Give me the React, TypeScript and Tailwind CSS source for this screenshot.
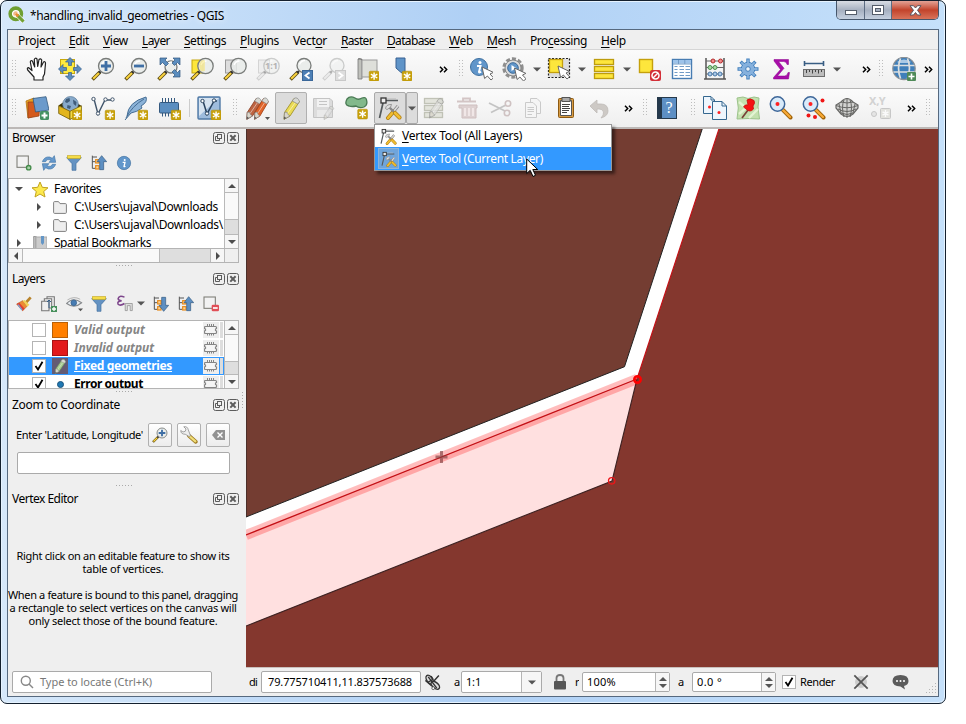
import React, { useLayoutEffect, useRef, useState } from "react";

type Kids = { children?: React.ReactNode };

/* Text whose letter spacing adapts so that it fills a given width. */
function Fit({ w, className = "", children }: Kids & { w: number; className?: string }) {
  const ref = useRef<HTMLSpanElement>(null);
  const [ls, setLs] = useState(0);
  useLayoutEffect(() => {
    const el = ref.current;
    if (!el) return;
    const n = (el.textContent || "").length;
    setLs((w - el.getBoundingClientRect().width) / Math.max(1, n));
  }, [w]);
  return (
    <span ref={ref} className={"inline-block shrink-0 whitespace-pre " + className} style={{ letterSpacing: ls }}>
      {children}
    </span>
  );
}

const U = ({ children }: Kids) => <span className="underline underline-offset-2">{children}</span>;

function Ico({ children, s = 24, className = "" }: Kids & { s?: number; className?: string }) {
  return (
    <svg width={s} height={s} viewBox="0 0 24 24" fill="none" className={"shrink-0 " + className}>
      {children}
    </svg>
  );
}
const Cell = ({ children, className = "" }: Kids & { className?: string }) => (
  <div className={"flex h-8 w-[33px] shrink-0 items-center justify-center pr-px " + className}>{children}</div>
);
const Handle = ({ className = "" }: { className?: string }) => (
  <div className={"flex shrink-0 justify-center " + className}>
    <svg width="5" height="18" viewBox="0 0 5 18">
      {[0, 3, 6, 9, 12, 15].map((y) => (
        <g key={y} fill="#bdbdbd">
          <rect x="0" y={y} width="1" height="1" />
          <rect x="3" y={y} width="1" height="1" />
        </g>
      ))}
    </svg>
  </div>
);
const Arrow = ({ className = "w-[11px]" }: { className?: string }) => (
  <div className={"flex shrink-0 justify-center " + className}>
    <svg width="8" height="5" viewBox="0 0 8 5"><path d="M0 0.5H8L4 4.5Z" fill="#555" /></svg>
  </div>
);
const More = ({ className = "w-6" }: { className?: string }) => (
  <div className={"flex shrink-0 justify-center " + className}>
    <svg width="9" height="7" viewBox="0 0 9 7" fill="none" stroke="#000" strokeWidth="1.5"><path d="M1 .7L3.7 3.5L1 6.3M5 .7L7.7 3.5L5 6.3" /></svg>
  </div>
);

/* Reusable icon parts */
const Star = ({ x = 14, y = 14 }: { x?: number; y?: number }) => (
  <g transform={`translate(${x} ${y})`}>
    <rect x=".2" y=".2" width="9.8" height="9.8" rx="1.2" fill="#c9a20c" stroke="#b38c00" strokeWidth=".5" />
    <path d="M5.1 1.4V8.8M1.9 3.2L8.3 7M8.3 3.2L1.9 7" stroke="#fff" strokeWidth="1.4" />
  </g>
);
const Lens = ({ dim = false, lx = 15, ly = 9, r = 7.5 }: { dim?: boolean; lx?: number; ly?: number; r?: number }) => (
  <g opacity={dim ? 0.35 : 1}>
    <path d="M1.5 22.5L9 15" stroke={dim ? "#888" : "#5d4b13"} strokeWidth="3.6" />
    <path d="M2.2 21.8L8.4 15.6" stroke={dim ? "#ddd" : "#fcd53f"} strokeWidth="2" />
    <path d="M8 16L10 14" stroke="#333" strokeWidth="2.4" />
    <circle cx={lx} cy={ly} r={r} fill="#e8ebe9" fillOpacity=".85" stroke="#797c7a" strokeWidth="1.3" />
    <path d={`M${lx - 4.5} ${ly - 1}Q${lx - 3} ${ly - 5} ${lx + 1} ${ly - 5}`} stroke="#fff" strokeWidth="1.3" />
  </g>
);
const Pencil = ({ c = "#eadb55", d = "#a1932b", tip = "#555" }: { c?: string; d?: string; tip?: string }) => (
  <g>
    <path d="M15 2.5L20.5 5.5L11 20L5 23.3L5.5 16.5Z" fill={c} stroke={d} strokeWidth=".9" />
    <path d="M5.5 16.5L8 16L8.5 18L11 20L5 23.3Z" fill="#d9d6cb" stroke="#777" strokeWidth=".6" />
    <path d="M5.1 20.5L7.3 22L5 23.3Z" fill={tip} />
    <path d="M15 2.5Q18.5.3 20.5 5.5L18.8 8L13.2 5Z" fill="#d7d8d2" stroke="#888" strokeWidth=".7" />
    <path d="M16 7L8.5 17.5" stroke="#fff" strokeOpacity=".5" />
  </g>
);
const Cursor = ({ x = 12, y = 10 }: { x?: number; y?: number }) => (
  <path transform={`translate(${x} ${y})`} d="M0 0L2.6 11.5L5.4 9L9 13L11.5 10.8L8 7L11.4 5.4Z" fill="#fff" stroke="#666" strokeWidth="1" />
);
const FourArrows = () => (
  <g fill="#5b8dbe" stroke="#385f8c" strokeWidth=".7">
    <path d="M12 .5L16.5 5H13.5V8.5H10.5V5H7.5Z" />
    <path d="M12 23.5L7.5 19H10.5V15.5H13.5V19H16.5Z" />
    <path d="M.5 12L5 7.5V10.5H8.5V13.5H5V16.5Z" />
    <path d="M23.5 12L19 16.5V13.5H15.5V10.5H19V7.5Z" />
  </g>
);
const Vertex = () => (
  <g>
    <path d="M8 4.5H20M5 7L1.5 22" stroke="#555a5c" strokeWidth="1.7" />
    <path d="M9 2.8H18" stroke="#bbb" strokeWidth=".8" />
    <rect x="3" y="2" width="5" height="5" fill="#eee" stroke="#333" strokeWidth="1.3" />
    <path d="M10 22L16 15" stroke="#a97a12" strokeWidth="4" strokeLinecap="round" />
    <path d="M10 22L16 15" stroke="#f0bd31" strokeWidth="2.6" strokeLinecap="round" />
    <path d="M15.5 15.5L20 10" stroke="#888" strokeWidth="3.2" />
    <path d="M15.5 15.5L20 10" stroke="#ddd" strokeWidth="1.6" />
    <path d="M11 11L17 17" stroke="#888" strokeWidth="2.4" />
    <path d="M7.5 12.5Q8 8.5 13.5 8.4L12.5 11.3L9 13.6Z" fill="#dedede" stroke="#888" strokeWidth=".8" />
    <path d="M17 17L21.5 21.5" stroke="#b07d10" strokeWidth="4" strokeLinecap="round" />
    <path d="M17 17L21.5 21.5" stroke="#f0bd31" strokeWidth="2.6" strokeLinecap="round" />
  </g>
);
const IHand = () => (
  <Ico><path d="M9 23V20L2.7 13Q1.6 10.8 3.7 10.7L7 13.5L5.3 5Q5.6 3 7.4 4L9.7 10L9.3 2.5Q10.2.2 12 2L12.7 9.5L14 2.5Q15.6 1 16.7 3L16 10L18.5 5Q20.5 4 20.5 6.5L19.5 17L18 20V23Z" fill="#fff" stroke="#222" strokeWidth="1.2" strokeLinejoin="round" /></Ico>
);
const IPan = () => (<Ico><rect x="2.5" y="2.5" width="14" height="14" fill="#fdea3e" stroke="#c8a80c" /><FourArrows /></Ico>);
const IZoomIn = ({ s = 24 }: { s?: number }) => (<Ico s={s}><Lens /><path d="M15 4V14M10 9H20" stroke="#3f6fa5" strokeWidth="2.8" /></Ico>);
const IZoomOut = () => (<Ico><Lens /><path d="M10 9H20" stroke="#3f6fa5" strokeWidth="2.8" /></Ico>);
const IZoomFull = () => (
  <Ico><Lens lx={14} ly={10} r={6} />
    <g fill="#5b8dbe" stroke="#31587f" strokeWidth=".7">
      <path d="M3 1H10L8 3L11.5 6.5L9 9L5.5 5.5L3 8Z" /><path d="M23 1V8L20.5 5.5L17.5 8.5L15 6L18 3L16 1Z" /><path d="M23 20H16L18 18L15 15L17.5 12.5L20.5 15.5L23 13Z" />
    </g>
  </Ico>
);
const IZoomSel = () => (<Ico><rect x="2" y="3" width="11" height="13" fill="#fde63c" stroke="#c5a60c" /><Lens lx={15.5} r={7.7} /><path d="M11 4Q15 2 15 4V14H11Q8 9 11 4" fill="#f7e36b" opacity=".5" /></Ico>);
const IZoomLayer = () => (<Ico><rect x="2.5" y="3" width="11" height="13" fill="#ddd" stroke="#999" /><Lens lx={15.5} r={7.7} /></Ico>);
const IZoomNative = () => (
  <div className="relative">
    <Ico><rect x="2.5" y="3" width="11" height="13" fill="#eee" stroke="#d4d4d4" /><Lens dim lx={15.5} r={7.7} /></Ico>
    <span className="absolute left-[9px] top-[2px] text-[9px] font-bold leading-[14px] text-[#b3b3b3]">1:1</span>
  </div>
);
const IZoomStep = ({ dim = false }: { dim?: boolean }) => (
  <Ico><Lens dim={dim} lx={15} ly={8.5} r={7} /><rect x="13.5" y="13.5" width="10" height="10" fill={dim ? "#ddd" : "#4d7fb5"} stroke={dim ? "#c8c8c8" : "#3a6799"} /><path d={dim ? "M16.5 15.5L20.5 18.5L16.5 21.5" : "M20.5 15.5L16.5 18.5L20.5 21.5"} stroke="#fff" strokeWidth="1.8" /></Ico>
);
const INewMap = () => (<Ico><path d="M3 2H7V22H3Z" fill="#bfc0bb" stroke="#777" strokeWidth=".8" /><rect x="7" y="3" width="15" height="17" fill="#dedfda" stroke="#999" /><path d="M3 2Q5 .7 7 3" stroke="#777" /><Star /></Ico>);
const IBookmark = () => (<Ico><path d="M8 1H17V18L12.5 15L8 11Z" fill="#5f94c8" stroke="#386192" /><Star x={14} /></Ico>);
const IInfo = ({ s = 24, cur = false }: { s?: number; cur?: boolean }) => (
  <Ico s={s}><circle cx={cur ? 10 : 12} cy={cur ? 10 : 12} r={cur ? 8.5 : 10} fill="#6196ca" stroke="#3f709f" /><g transform={cur ? "" : "translate(2 2)"}><path d="M8 9H11.5L10 15Q10.5 16 12 14.5" stroke="#fff" strokeWidth="2" /><circle cx="11" cy="5.5" r="1.5" fill="#fff" /></g>{cur && <Cursor x={13} y={10} />}</Ico>
);
const IAction = () => (<Ico><circle cx="11" cy="11" r="9.2" stroke="#8e8e8e" strokeWidth="3" strokeDasharray="4 2" /><circle cx="11" cy="11" r="8" fill="#ddd" stroke="#888" /><circle cx="11" cy="11" r="5.3" fill="#6196ca" stroke="#3d6b9a" /><path d="M9.5 8L14 11L9.5 14Z" fill="#fff" /><Cursor x={12.5} y={11} /></Ico>);
const ISelect = () => (<Ico><rect x="1.5" y="1.5" width="21" height="19" fill="#ddd" stroke="#222" strokeWidth="1.2" strokeDasharray="2 1.5" /><rect x="2.5" y="2.5" width="13" height="13" fill="#fde63c" stroke="#c5a00c" strokeWidth="1.3" /><Cursor x={11} y={9} /></Ico>);
const IRows = () => (<Ico><g fill="#fde63c" stroke="#bd9c0d" strokeWidth="1.3"><rect x="2.5" y="2.5" width="19" height="5" /><rect x="2.5" y="9.5" width="19" height="5" /><rect x="2.5" y="16.5" width="19" height="5" /></g></Ico>);
const IDeselect = () => (<Ico><rect x="2.5" y="2.5" width="13" height="13" fill="#fde63c" stroke="#c5a00c" strokeWidth="1.4" /><rect x="13" y="13" width="11" height="11" rx="2" fill="#d32f38" /><circle cx="18.5" cy="18.5" r="3.5" stroke="#fff" strokeWidth="1.5" /><path d="M16 21L21 16" stroke="#fff" strokeWidth="1.5" /></Ico>);
const ITable = () => (<Ico><rect x="2.5" y="2.5" width="19" height="19" fill="#fff" stroke="#477cb2" strokeWidth="1.4" /><rect x="3" y="3" width="18" height="3.5" fill="#9dc3ea" /><path d="M4.5 9.5H7.5M9.5 9.5H14M15.5 9.5H20M4.5 12.5H7.5M9.5 12.5H14M15.5 12.5H20M4.5 15.5H7.5M9.5 15.5H14M15.5 15.5H20M4.5 18.5H7.5M9.5 18.5H14M15.5 18.5H20" stroke="#719bc6" strokeWidth="1.2" /><path d="M3 7H21M8.5 3V7M14.8 3V7" stroke="#719bc6" /></Ico>);
const IAbacus = () => (<Ico><path d="M3 1V22M21 1V22M1 22H23" stroke="#555" strokeWidth="1.5" /><path d="M3 4H21M3 10.5H21M3 17H21" stroke="#666" strokeWidth="1.1" /><g fill="#f28c8c" stroke="#b32b2b"><circle cx="10" cy="4" r="2" /><circle cx="17.5" cy="4" r="2" /></g><g fill="#a7d7a2" stroke="#4d9150"><circle cx="7" cy="10.5" r="2" /><circle cx="12" cy="10.5" r="2" /></g><g fill="#a9c8e7" stroke="#4977a6"><circle cx="7" cy="17" r="2" /><circle cx="12" cy="17" r="2" /><circle cx="17" cy="17" r="2" /></g></Ico>);
const IGear = () => (<Ico><g stroke="#4380bd" strokeWidth="3.4"><path d="M12 1.5V22.5M1.5 12H22.5M4.6 4.6L19.4 19.4M19.4 4.6L4.6 19.4" /></g><circle cx="12" cy="12" r="6.8" fill="#86b1dd" stroke="#4380bd" /><path d="M12 2.5V21.5M2.5 12H21.5M5.3 5.3L18.7 18.7M18.7 5.3L5.3 18.7" stroke="#86b1dd" strokeWidth="1.8" /><circle cx="12" cy="12" r="2.3" fill="#eef3f8" stroke="#4380bd" /></Ico>);
const ISigma = () => (<Ico><path d="M5 2.5H19.5V7.5H18Q17.5 4.5 14.5 4.5H9.5L15 11.3L8.5 19H15.5Q18.3 19 19 15.5H20.5L19.5 22H4.5V20.5L11.5 12.5L5 4Z" fill="#a80da9" stroke="#8a008b" strokeWidth=".5" /></Ico>);
const IRuler = () => (<Ico><path d="M2.5 6.5H21.5M2.5 4V9M21.5 4V9" stroke="#385d83" strokeWidth="1.6" /><rect x="1.5" y="12.5" width="21" height="7" fill="#bdbdbd" stroke="#6d6d6d" /><path d="M4.5 13V16M7.5 13V15M10.5 13V16.5M13.5 13V15M16.5 13V16.5M19.5 13V15" stroke="#444" /></Ico>);
const IGlobe = () => (<Ico><circle cx="12" cy="11.5" r="11.2" fill="#3f7fba" stroke="#8a8f94" strokeWidth="1.2" /><path d="M5 5Q12 0 19 5L17 6H7Z" fill="#a9c9e6" /><path d="M1.5 8.5H22.5M1.5 15H22.5M8.5 1.5Q4.5 11 8.5 21.5M15.5 1.5Q19.5 11 15.5 21.5" stroke="#dcdfe0" strokeWidth="1.7" /><rect x="15" y="15" width="9" height="9" rx="1" fill="#4f8a58" /><path d="M19.5 16.5V22.5M16.5 19.5H22.5" stroke="#fff" strokeWidth="1.6" /></Ico>);
/* Second tool bar */
const IDataSrc = () => (<Ico><path d="M1 5L9 2L12 19L3 22Z" fill="#e9a221" stroke="#b27111" strokeWidth=".8" /><path d="M3 6L15 6L14 20L3 22Z" fill="#d45a1d" stroke="#984419" strokeWidth=".8" /><path d="M8 2.5L21 .7L24 14L10.5 16Z" fill="#6b9acb" stroke="#335a80" strokeWidth=".8" /><rect x="15" y="15" width="9" height="9" rx="1.5" fill="#459162" /><path d="M19.5 16.5V22.5M16.5 19.5H22.5" stroke="#fff" strokeWidth="2" /></Ico>);
const IGeopkg = () => (<Ico><path d="M.5 9.5L5 6.5L19 7L23.5 10L12 15.5Z" fill="#3a3206" /><circle cx="12.5" cy="8.3" r="7.8" fill="#88aacb" stroke="#5c7b9a" strokeWidth=".7" /><path d="M8 3L11.5 2L12 5L9 7L7 6ZM15 3.5L18.5 6L18 10L15.5 8ZM9.5 9L13 10L12 13L9 12Z" fill="#3f5c7a" /><path d="M.7 9.8L12 15.3V23.4L.7 17.5Z" fill="#e2b51d" stroke="#6e5905" strokeWidth=".8" /><path d="M12 15.3L23.4 9.8V17.5L12 23.4Z" fill="#ffe84f" stroke="#6e5905" strokeWidth=".8" /><Star /></Ico>);
const IShp = () => (<Ico><path d="M3 3L7 18L14 4H20" stroke="#41556b" strokeWidth="1.4" /><g fill="#fff" stroke="#41556b" strokeWidth="1"><circle cx="2.5" cy="3" r="1.7" /><circle cx="14.5" cy="3.5" r="1.7" /><circle cx="21.5" cy="3.5" r="1.7" /><circle cx="7" cy="17.5" r="1.7" /></g><Star /></Ico>);
const IFeather = () => (<Ico><path d="M3 20Q4 6 22 1Q24 6 17 10L18 12Q13 16 7 17L1 24" fill="#8cb3d8" stroke="#456d94" /><path d="M2 22Q8 10 20 3" stroke="#456d94" /><Star /></Ico>);
const IMem = () => (<Ico><path d="M5.5 2V20.5M8.5 2V20.5M11.5 2V20.5M14.5 2V20.5M17.5 2V20.5" stroke="#34597f" strokeWidth="1" /><rect x="2.5" y="6.5" width="19" height="10.5" rx="1" fill="#5b8ec0" stroke="#34597f" /><Star /></Ico>);
const IVirt = () => (<Ico><rect x="1" y="1" width="22" height="22" rx="1" fill="#9ebcdd" stroke="#5079a5" strokeWidth="1.4" /><path d="M2 2H22L2 20Z" fill="#d6e3f0" /><path d="M6 5L10 18L17 5H20" stroke="#29435f" strokeWidth="1.5" /><g fill="#fff" stroke="#29435f"><circle cx="5.5" cy="5" r="1.7" /><circle cx="17" cy="4.5" r="1.7" /><circle cx="10" cy="17.5" r="1.7" /></g><Star /></Ico>);
const IEdits = () => (<Ico><g transform="translate(-4 0) scale(.95 1)"><Pencil c="#bd6442" d="#8f4023" /></g><g transform="translate(4 0) scale(.9 1)"><Pencil c="#e0642a" d="#a34115" /></g><path d="M19 21H24L21.5 24Z" fill="#555" /></Ico>);
const ISave = () => (<Ico><path d="M2.5 2.5H19L21.5 5V21.5H2.5Z" fill="#dcdcdc" stroke="#c4c4c4" /><rect x="6" y="3" width="12" height="8" fill="#f2f2f2" /><rect x="6" y="14" width="11" height="7" fill="#eaeaea" /><path d="M8 5.5H16M8 8.5H16" stroke="#c4c4c4" /><g transform="translate(10 9) scale(.62)" opacity=".6"><Pencil c="#ddd" d="#aaa" tip="#aaa" /></g></Ico>);
const IPoly = () => (<Ico><path d="M3 3Q6-.5 11 2Q14 4.5 18 2Q22 .5 22.5 4Q24 9 20 11Q15 12.5 12 10Q8 11 5 10Q0 9 3 3Z" fill="#82b98b" stroke="#4a7a54" strokeWidth="1.3" /><Star x={13.5} y={13} /></Ico>);
const IMulti = () => (<Ico><g fill="#e3e4dc" stroke="#c0c2b6" strokeWidth="1.3"><rect x="2.5" y="2.5" width="18" height="5" /><rect x="2.5" y="9.5" width="18" height="5" /><rect x="2.5" y="16.5" width="18" height="5" /></g><g opacity=".75" transform="translate(3 1) scale(.9)"><Pencil c="#dfdfdc" d="#b5b5b0" tip="#999" /></g></Ico>);
const ITrash = () => (<Ico><path d="M2 5.5H21M8 5V2.5H15V5" stroke="#d3c5c5" strokeWidth="1.8" /><path d="M4 9H22V12H21V22H7V12H4Z" fill="#ddd1d1" stroke="#cfbfbf" /><path d="M10 12V20M14 12V20M18 12V20" stroke="#f5eded" strokeWidth="1.6" /></Ico>);
const ICut = () => (<Ico><path d="M1 7L17 15M3 16.5L18 9" stroke="#c4c4c4" strokeWidth="1.8" /><g stroke="#cfc2c2" strokeWidth="1.6"><circle cx="20" cy="7.5" r="2.7" /><circle cx="19" cy="17" r="2.7" /></g></Ico>);
const ICopy = () => (<Ico><g fill="#f5f5f5" stroke="#cacaca"><path d="M9.5 2.5H16L19.5 6V17.5H9.5Z" /><path d="M4.5 6.5H12L15.5 10V21.5H4.5Z" /></g><path d="M6.5 11.5H13M6.5 13.5H13M6.5 15.5H13M6.5 18.5H11" stroke="#cacaca" /></Ico>);
const IPaste = () => (<Ico><rect x="4.5" y="2.5" width="15" height="19" rx="1" fill="#d69b45" stroke="#8d5a12" /><path d="M6.5 4.5H17.5V19.5H6.5Z" fill="#fff" stroke="#555" /><rect x="8" y="1.5" width="8" height="4" fill="#aaa" stroke="#555" /><path d="M8 8.5H16M8 10.5H15M8 12.5H16M8 14.5H15M8 16.5H13" stroke="#444" /></Ico>);
const IUndo = () => (<Ico><path d="M3 10L10 4V8H14Q21 8 21 15Q21 20 14 22Q17 19 16.5 16Q16 13 12 13H10V17Z" fill="#cdc9c5" stroke="#bfbbb7" strokeWidth=".8" /></Ico>);
const IHelp = () => (
  <div className="flex h-[22px] w-[20px] border border-[#26394b] bg-[#5d8fc4]">
    <div className="w-[4px] shrink-0 bg-[#24384c]" />
    <span className="w-[14px] text-center font-['Liberation_Serif',serif] text-[16px] leading-[20px] text-white">?</span>
  </div>
);
const IPages = () => (<Ico><g fill="#eef6fd" stroke="#35678f"><path d="M.5 .5H8L11.5 4V17.5H.5Z" /><path d="M9.5 5.5H19L23.5 10V23.5H9.5Z" /></g><path d="M8 1V4H11.5M19 5.5V10H23.5" stroke="#35678f" /><circle cx="6.5" cy="11" r="1.5" fill="#f22" /><circle cx="16" cy="16.5" r="1.5" fill="#f22" /></Ico>);
const IPin = () => (<Ico><path d="M1 2L7 1L12 2.5L18 1L23 2L22 11L23.5 23L12 22.5L1 23L2.3 12Z" fill="#c3e0ae" stroke="#9cc38b" /><path d="M3 6L10 12L3 18M13 22L22 13" stroke="#e3f4d2" strokeWidth="2.4" /><path d="M6 22L12 14" stroke="#774238" strokeWidth="1.7" /><path d="M11 4Q14 1.5 18 4.5Q19.5 7 17 10L17.5 13Q14 17 10 13L7.5 11Q9 8 12 9Z" fill="#f51313" stroke="#c90d0d" strokeWidth=".8" /></Ico>);
const IFind = ({ many = false }: { many?: boolean }) => (<Ico><path d="M14 14L21.5 21.5" stroke="#9f6207" strokeWidth="4" strokeLinecap="round" /><path d="M14 14L21 21" stroke="#f7a936" strokeWidth="2.4" strokeLinecap="round" /><circle cx="8.5" cy="8" r="7.2" fill="#d9ebfa" stroke="#3e6799" strokeWidth="1.5" /><circle cx="8.5" cy="8" r="2" fill="#f22" />{many && <g fill="#f01515"><circle cx="20.5" cy="4.5" r="2" /><circle cx="6.5" cy="19.5" r="2" /><circle cx="13" cy="21" r="2" /></g>}</Ico>);
const IWire = () => (<Ico><path d="M6 6Q12-1 18 6L23 9V12L18 18Q12 23 6 18L1 12V9Z" fill="#d2d2d0" stroke="#666664" strokeWidth="1.2" /><path d="M1 9.5Q12 14 23 9.5M3 13Q12 18 21 13M6 17Q12 20 18 17M6 6Q12 8 18 6M9 4Q6 11 9 21M15 4Q18 11 15 21M12 2V22M4 8L6 17M20 8L18 17" stroke="#666664" strokeWidth="1" /></Ico>);
const IXY = () => (
  <div className="relative h-6 w-6 opacity-60">
    <span className="absolute left-[1px] top-0 text-[11px] font-bold leading-[10px] text-[#bbb]">X,Y</span>
    <svg className="absolute inset-0" width="24" height="24" viewBox="0 0 24 24"><circle cx="6" cy="18" r="2.5" fill="#ddd" stroke="#aaa" /><rect x="12.5" y="12.5" width="10" height="10" rx="1" fill="#d8d8d0" stroke="#aaa" /><path d="M17.5 14V21M14.5 15.8L20.5 19.2M20.5 15.8L14.5 19.2" stroke="#fff" strokeWidth="1.4" /></svg>
  </div>
);

/* Panel pieces */
const DockTitle = ({ text, w, className = "" }: { text: string; w: number; className?: string }) => (
  <div className={"flex h-[18px] shrink-0 items-center pl-1 pr-[6px] " + className}>
    <Fit w={w}>{text}</Fit>
    <svg className="ml-auto" width="27" height="12" viewBox="0 0 27 12" fill="none" stroke="#5c5c5c">
      <rect x=".5" y=".5" width="11" height="11" rx="2" /><rect x="4.5" y="2.5" width="4" height="4" /><path d="M4.5 4.5H2.5V8.5H6.5V7" />
      <rect x="14.5" y=".5" width="11" height="11" rx="2" /><path d="M17.3 3.3L22.6 8.6M22.6 3.3L17.3 8.6" strokeWidth="2" />
    </svg>
  </div>
);
const Split = ({ className = "" }: { className?: string }) => (
  <div className={"flex shrink-0 justify-center pr-[5px] " + className}>
    <svg width="17" height="1" viewBox="0 0 17 1" fill="#aaa">{[0, 3, 6, 9, 12, 15].map((x) => <rect key={x} x={x} y="0" width="1" height="1" />)}</svg>
  </div>
);
const Tri = ({ d }: { d: string }) => <svg width="8" height="8" viewBox="0 0 8 8"><path d={d} fill="#4c4c4c" /></svg>;
const TUP = "M0 6H8L4 2Z", TDN = "M0 2H8L4 6Z", TLT = "M6 0V8L2 4Z", TRT = "M2 0V8L6 4Z";
const VBar = ({ thumb, className = "" }: { thumb: string; className?: string }) => (
  <div className={"flex w-[14px] shrink-0 flex-col border-l border-[#b9b9b9] bg-[#dedede] " + className}>
    <div className="flex h-[14px] shrink-0 items-center justify-center border-b border-[#b9b9b9] bg-[#f6f6f6]"><Tri d={TUP} /></div>
    <div className={"border-b border-[#b9b9b9] bg-[#f9f9f9] " + thumb} />
    <div className="mt-auto flex h-[14px] shrink-0 items-center justify-center border-t border-[#b9b9b9] bg-[#f6f6f6]"><Tri d={TDN} /></div>
  </div>
);
const INew = ({ minus = false }: { minus?: boolean }) => (<Ico s={16}><rect x="1.5" y="1.5" width="17" height="17" fill="#f2f2f2" stroke="#7d7d76" strokeWidth="1.6" />{minus ? <><rect x="13" y="13" width="11" height="10" rx="2" fill="#e14f57" /><path d="M15 18H22" stroke="#fff" strokeWidth="2.5" /></> : <circle cx="19" cy="19" r="3.3" fill="#a9d1a9" stroke="#448b4a" strokeWidth="2" />}</Ico>);
const IRefresh = () => (<Ico s={16}><path d="M2 10Q5 2 13 3L17 5L20 1L22 11H12L15 8Q9 5 7 10Z" fill="#6598cc" stroke="#4477a8" /><path d="M22 14Q19 22 11 21L7 19L4 23L2 13H12L9 16Q15 19 17 14Z" fill="#6598cc" stroke="#4477a8" /></Ico>);
const IFilter = () => (<Ico s={16}><path d="M1 4H23L15 13V23H9V13Z" fill="#6492c2" stroke="#42709f" /><rect x="2" y="1" width="20" height="4" fill="#f5dc47" stroke="#c7ab25" /></Ico>);
const ITree = ({ up = true }: { up?: boolean }) => (<Ico s={16}><path d="M2 1V20H7M2 10H7M2 3H9" stroke="#555" strokeWidth="1.5" /><g fill="#fbd49a" stroke="#e78b1b" strokeWidth="1.8"><rect x="7" y="7" width="5" height="5" /><rect x="7" y="16" width="5" height="5" /></g><path d={up ? "M16 1L23.5 10H19V22H13V10H9Z" : "M16 23L23.5 14H19V2H13V14H9Z"} fill="#5d8fc2" stroke="#31577f" /></Ico>);
const IFolder = () => (<svg width="14" height="13" viewBox="0 0 14 13"><path d="M.6 1.6Q.6.6 1.6.6H5.5L7 2.6H12.4Q13.4 2.6 13.4 3.6V11.4Q13.4 12.4 12.4 12.4H1.6Q.6 12.4.6 11.4Z" fill="#eee" stroke="#808080" /></svg>);
const IChip = () => (<svg width="14" height="12" viewBox="0 0 14 12" fill="none" stroke="#858585"><path d="M3.5 0V3M5.5 0V3M7.5 0V3M9.5 0V3M3.5 9V11.5M5.5 9V11.5M7.5 9V11.5M9.5 9V11.5" /><path d="M1.5 2.5H11.5Q12.5 2.5 12.5 3.5V4.5L11.5 5V6.5L12.5 7V8.5Q12.5 9.5 11.5 9.5H1.5Q.5 9.5 .5 8.5V7L1.5 6.5V5L.5 4.5V3.5Q.5 2.5 1.5 2.5Z" fill="#f5f5f5" strokeWidth="1.2" /></svg>);
const Check = ({ on }: { on: boolean }) => (
  <div className="flex h-[14px] w-[14px] shrink-0 items-center justify-center border border-[#b4b4b4] bg-white">
    {on && <svg width="10" height="10" viewBox="0 0 10 10" fill="none"><path d="M1.5 5L4 8.5L8.5 .8" stroke="#000" strokeWidth="1.8" /></svg>}
  </div>
);
function LayerRow({ on, icon, text, w, cls = "" }: { on: boolean; icon: React.ReactNode; text: string; w: number; cls?: string }) {
  return (
    <div className={"flex h-[18px] shrink-0 items-center pl-[23px] " + cls}>
      <Check on={on} />
      <div className="ml-[6px] flex w-4 justify-center">{icon}</div>
      <Fit w={w} className="ml-[6px] text-[12px] font-bold">{text}</Fit>
      <div className="ml-auto flex h-4 w-[16px] items-center justify-center bg-[#eee]"><IChip /></div>
      <div className="ml-px mr-px h-4 w-[3px] bg-[#ddd]" />
    </div>
  );
}
const btn = "flex h-6 w-6 items-center justify-center rounded-[2px] border border-[#b0b0b0] bg-gradient-to-b from-white to-[#ececec]";
const field = "flex items-center rounded-[2px] border border-[#aaa] bg-white ";
const Spin = () => (
  <div className="ml-auto flex h-full w-[14px] flex-col items-center justify-center border-l border-[#b5b5b5] bg-[#f6f6f6]">
    <svg width="8" height="13" viewBox="0 0 8 13" fill="#555"><path d="M0 5H8L4 1ZM0 8H8L4 12Z" /></svg>
  </div>
);
const MENUS: [string, string, string, number][] = [
  ["Pro", "j", "ect", 37], ["", "E", "dit", 20], ["", "V", "iew", 25], ["", "L", "ayer", 28], ["", "S", "ettings", 42], ["", "P", "lugins", 39], ["Vect", "o", "r", 34],
  ["", "R", "aster", 32], ["", "D", "atabase", 48], ["", "W", "eb", 24], ["", "M", "esh", 29], ["Pro", "c", "essing", 57], ["", "H", "elp", 25],
];

export default function App() {
  return (
    <div className="h-[724px] w-[966px] overflow-hidden bg-white font-['Noto_Sans','Open_Sans',sans-serif] text-[12px] leading-[16px] text-black">
      <div className="relative flex h-[704px] w-[946px] flex-col rounded-[7px] border border-[#14202e] bg-[#badaf9] bg-gradient-to-r from-[#d6e8fa] via-[#afd0f5] to-[#c5e0fa] px-[7px] pb-[6px] shadow-[inset_0_0_0_1px_#e6f3ff]">
        {/* Title bar */}
        <div className="flex h-[28px] shrink-0 items-center">
          <Ico s={17} className="-mt-[1px]"><circle cx="11" cy="11" r="8" stroke="#6f9f31" strokeWidth="5" fill="#fff" /><circle cx="11" cy="11" r="3.6" fill="#f0b88a" /><path d="M11 11L22 22" stroke="#fff" strokeWidth="6" /><path d="M13 13L22 22" stroke="#72a135" strokeWidth="4.5" /><path d="M11 11L14.5 14.5" stroke="#e98d34" strokeWidth="4" /></Ico>
          <Fit w={194} className="ml-[5px] pt-px [text-shadow:0_0_6px_#fff]">*handling_invalid_geometries - QGIS</Fit>
          <div className="-mr-px ml-auto flex h-[19px] w-[103px] self-start overflow-hidden rounded-b-[5px] border border-t-0 border-[#46566b]">
            <div className="flex w-[28px] items-center justify-center border-r border-[#5c6c82] bg-gradient-to-b from-[#d9dde4] via-[#a6b0c0] via-50% to-[#c5d0df]"><div className="mt-[4px] h-[5px] w-[12px] border border-[#555d6a] bg-white" /></div>
            <div className="flex w-[27px] items-center justify-center border-r border-[#5c6c82] bg-gradient-to-b from-[#d9dde4] via-[#a6b0c0] via-50% to-[#c5d0df]"><div className="flex h-[10px] w-[12px] items-center justify-center border border-[#555d6a] bg-white"><div className="h-[4px] w-[6px] border border-[#555d6a] bg-[#a6b0c0]" /></div></div>
            <div className="flex flex-1 items-center justify-center bg-gradient-to-b from-[#e2a296] via-[#c2432b] via-50% to-[#d9735a]"><svg width="13" height="11" viewBox="0 0 13 11"><path d="M1 .7H4.5L6.5 3L8.5.7H12L8.5 5.3L12 10H8.5L6.5 7.5L4.5 10H1L4.5 5.3Z" fill="#fff" stroke="#5a5560" /></svg></div>
          </div>
        </div>
        {/* Client area */}
        <div className="relative -mx-px flex min-h-0 flex-1 flex-col border border-[#56697f] bg-[#efefef]">
          <div className="flex h-[20px] shrink-0 items-center gap-[14px] border-b border-[#d5d5d5] pl-[10px] pt-[2px]">
            {MENUS.map(([a, b, c, w]) => <Fit key={b + c} w={w}>{a}<U>{b}</U>{c}</Fit>)}
          </div>
          <div className="flex h-[39px] shrink-0 items-center border-b border-[#b6b6b6] bg-gradient-to-b from-[#fbfbfb] to-[#efefef]">
            <Handle className="w-[13px]" />
            <Cell><IHand /></Cell><Cell><IPan /></Cell><Cell><IZoomIn /></Cell><Cell><IZoomOut /></Cell><Cell><IZoomFull /></Cell><Cell><IZoomSel /></Cell><Cell><IZoomLayer /></Cell><Cell><IZoomNative /></Cell><Cell><IZoomStep /></Cell><Cell><IZoomStep dim /></Cell><Cell><INewMap /></Cell><Cell><IBookmark /></Cell>
            <More className="ml-[14px] w-6" /><Handle className="ml-[2px] w-[8px]" />
            <Cell><IInfo cur /></Cell><Cell><IAction /></Cell><Arrow /><Cell className="ml-px"><ISelect /></Cell><Arrow className="w-3" /><Cell><IRows /></Cell><Arrow />
            <Cell className="ml-px"><IDeselect /></Cell><Cell><ITable /></Cell><Cell><IAbacus /></Cell><Cell><IGear /></Cell><Cell><ISigma /></Cell><Cell><IRuler /></Cell><Arrow />
            <More className="ml-[12px] w-6" /><Handle className="w-[7px]" /><Cell className="ml-[3px]"><IGlobe /></Cell><More className="w-[15px]" />
          </div>
          <div className="flex h-[40px] shrink-0 items-center border-b-2 border-[#bcb8b6] bg-gradient-to-b from-[#fbfbfb] to-[#efefef]">
            <Handle className="w-[13px]" />
            <Cell><IDataSrc /></Cell><Cell><IGeopkg /></Cell><Cell><IShp /></Cell><Cell><IFeather /></Cell><Cell><IMem /></Cell>
            <div className="mx-[3px] h-[18px] w-px bg-[#ccc]" /><Cell><IVirt /></Cell>
            <Handle className="ml-[5px] w-[9px]" /><Cell className="ml-[2px]"><IEdits /></Cell>
            <Cell className="w-8! rounded-[2px] border border-[#b0b0b0] bg-[#dcdcdc] pr-0!"><Ico><Pencil /></Ico></Cell>
            <Cell><ISave /></Cell><Cell><IPoly /></Cell>
            <Cell className="ml-px w-8! rounded-[2px] border border-[#aaa] bg-[#dcdcdc] pr-0!"><Ico><Vertex /></Ico></Cell>
            <Cell className="w-3! rounded-[2px] border border-[#aaa] bg-[#dcdcdc] pr-0!"><Arrow className="w-2" /></Cell>
            <Cell><IMulti /></Cell><Cell><ITrash /></Cell><Cell><ICut /></Cell><Cell><ICopy /></Cell><Cell><IPaste /></Cell><Cell><IUndo /></Cell>
            <More /><Handle className="ml-[2px] w-[7px]" /><Cell className="ml-[2px]"><IHelp /></Cell><Handle className="ml-[5px] w-[8px]" />
            <Cell className="ml-[2px]"><IPages /></Cell><Cell><IPin /></Cell><Cell><IFind /></Cell><Cell><IFind many /></Cell><Cell><IWire /></Cell><Cell><IXY /></Cell>
            <More className="ml-[3px] w-[23px]" /><Handle className="ml-[2px] w-[7px]" />
          </div>

          <div className="flex min-h-0 flex-1">
            {/* Docked panels */}
            <div className="relative flex w-[238px] shrink-0 flex-col">
              <DockTitle text="Browser" w={43} />
              <div className="flex h-[31px] shrink-0 items-center gap-[9px] pl-[8px]"><INew /><IRefresh /><IFilter /><ITree /><IInfo s={16} /></div>
              <div className="mr-[7px] flex h-[85px] shrink-0 flex-col border border-[#b4b4b4] bg-white">
                <div className="flex min-h-0 flex-1 overflow-hidden">
                  <div className="w-[215px] shrink-0 overflow-hidden pt-px">
                    <div className="flex h-[18px] items-center pl-[6px]"><Tri d={TDN} /><svg className="ml-[8px]" width="18" height="17" viewBox="0 0 18 17"><path d="M9 1L11.3 6.3L17 6.8L12.7 10.5L14 16L9 13L4 16L5.3 10.5L1 6.8L6.7 6.3Z" fill="#fde94d" stroke="#c2a321" /></svg><Fit w={47} className="ml-[5px]">Favorites</Fit></div>
                    <div className="flex h-[18px] items-center pl-[26px]"><Tri d={TRT} /><div className="ml-[10px]"><IFolder /></div><Fit w={144} className="ml-[7px]">C:\Users\ujaval\Downloads</Fit></div>
                    <div className="flex h-[18px] items-center pl-[26px]"><Tri d={TRT} /><div className="ml-[10px]"><IFolder /></div><Fit w={149} className="ml-[7px]">C:\Users\ujaval\Downloads\</Fit></div>
                    <div className="flex h-[18px] items-center pl-[6px]"><Tri d={TRT} /><svg className="ml-[10px]" width="14" height="14" viewBox="0 0 14 14"><path d="M0 1L3 0V13L0 14Z" fill="#bbb" stroke="#999" /><rect x="3" y="1" width="11" height="12" fill="#ccc" stroke="#aaa" /><path d="M8 0H11V7L9.5 9L8 7Z" fill="#6496c6" /></svg><Fit w={97} className="ml-[7px]">Spatial Bookmarks</Fit></div>
                  </div>
                  <VBar thumb="h-[27px]" />
                </div>
                <div className="flex h-[14px] shrink-0 border-t border-[#b4b4b4] bg-[#dedede]">
                  <div className="flex w-[14px] items-center justify-center border-r border-[#b9b9b9] bg-[#f6f6f6]"><Tri d={TLT} /></div>
                  <div className="w-[137px] border-r border-[#b9b9b9] bg-[#f9f9f9]" />
                  <div className="ml-auto flex w-[15px] items-center justify-center border-x border-[#b9b9b9] bg-[#f6f6f6]"><Tri d={TRT} /></div>
                  <div className="w-[13px] bg-[#efefef]" />
                </div>
              </div>
              <Split className="mt-[2px] h-[5px]" />
              <DockTitle text="Layers" w={33} />
              <div className="flex h-[32px] shrink-0 items-center pb-px pl-[8px]">
                <Ico s={16}><path d="M13 12L22 2" stroke="#b8832b" strokeWidth="4" /><path d="M1 12L10 7L17 15L10 22Z" fill="#eb8b35" stroke="#bb662b" /><path d="M1 12L5 10L13 19L10 22Z" fill="#df3e35" /><path d="M10 7L13 6L20 13L17 16Z" fill="#f2d35a" /><path d="M3 13L9 21" stroke="#78a4d4" strokeWidth="2" /></Ico>
                <Ico s={16} className="ml-[9px]"><path d="M1 8H12V22H1ZM5 8V4H16V18H12M9 4V1H20V15" stroke="#777" strokeWidth="1.6" /><path d="M12 18V6L9 9M12 6L15 9" stroke="#345e8a" strokeWidth="1.5" /><rect x="15" y="15" width="9" height="9" fill="#468f5b" /><path d="M19.5 16.5V22.5M16.5 19.5H22.5" stroke="#fff" strokeWidth="2" /></Ico>
                <Ico s={17} className="ml-[9px]"><path d="M1 12Q10 2 22 11Q12 20 1 12Z" fill="#e8edf2" stroke="#86898c" strokeWidth="1.6" /><circle cx="11" cy="11" r="4" fill="#477cb3" stroke="#355d86" /><path d="M2 7Q11 1 20 6" stroke="#999" /><path d="M17 19H24L20.5 23Z" fill="#555" /></Ico>
                <div className="ml-[8px]"><IFilter /></div>
                <Ico s={17} className="ml-[9px]"><path d="M12 3Q4 0 3 5Q3 8 8 8Q1 9 3 13Q6 16 12 12" stroke="#7d458b" strokeWidth="2.2" /><path d="M13 22V12H23V22H20V15H16V22Z" fill="#ddd" stroke="#888" /></Ico>
                <Arrow className="ml-[3px] w-[10px]" />
                <div className="ml-[7px]"><ITree up={false} /></div><div className="ml-[9px]"><ITree /></div><div className="ml-[9px]"><INew minus /></div>
              </div>
              <div className="mr-[7px] flex h-[69px] shrink-0 border border-[#b4b4b4] bg-white">
                <div className="flex w-[215px] shrink-0 flex-col overflow-hidden">
                  <LayerRow on={false} w={71} text="Valid output" cls="italic text-[#858585]" icon={<div className="h-4 w-4 border border-[#b86008] bg-[#ff7f00]" />} />
                  <LayerRow on={false} w={80} text="Invalid output" cls="italic text-[#858585]" icon={<div className="h-4 w-4 border border-[#a51416] bg-[#e31a1c]" />} />
                  <LayerRow on w={98} text="Fixed geometries" cls="bg-[#3399ff] text-white underline" icon={<div className="h-4 w-4 bg-[#645b74]"><Ico s={16}><Pencil c="#a8cc91" d="#66865a" /></Ico></div>} />
                  <LayerRow on w={69} text="Error output" icon={<div className="h-[7px] w-[7px] rounded-full border border-[#1b547d] bg-[#1f78b4]" />} />
                </div>
                <VBar thumb="h-[27px]" />
              </div>
              <Split className="mt-[2px] h-[5px]" />
              <DockTitle text="Zoom to Coordinate" w={108} />
              <div className="flex h-[42px] shrink-0 items-center pl-[8px] text-[11px]">
                <Fit w={127}>Enter 'Latitude, Longitude'</Fit>
                <div className={btn + " ml-[5px]"}><IZoomIn s={16} /></div>
                <div className={btn + " ml-[5px]"}><Ico s={18}><path d="M12 13L21 21" stroke="#9f7a20" strokeWidth="5" strokeLinecap="round" /><path d="M12 13L20.5 20.5" stroke="#efdd78" strokeWidth="3" strokeLinecap="round" /><path d="M1 6L4 8L7 7L8 4L5 1Q10 0 11 5L14 13L12 14L7 11Q1 11 1 6Z" fill="#eee" stroke="#888" /></Ico></div>
                <div className={btn + " ml-[5px]"}><svg width="13" height="10" viewBox="0 0 13 10"><path d="M0 5L4 0H13V10H4Z" fill="#929292" /><path d="M5.5 2.5L10.5 7.5M10.5 2.5L5.5 7.5" stroke="#fff" strokeWidth="1.4" /></svg></div>
              </div>
              <div className="ml-[9px] mr-4 -mt-[4px] h-[22px] shrink-0 rounded-[2px] border border-[#aaa] bg-white" />
              <Split className="mt-[11px] h-[5px]" />
              <DockTitle text="Vertex Editor" w={66} />
              <div className="-mx-px mt-[41px] flex w-[232px] flex-col items-center text-[11px] leading-[13px]">
                <Fit w={213}>Right click on an editable feature to show its</Fit>
                <Fit w={81}>table of vertices.</Fit>
                <Fit w={230} className="mt-[13px]">When a feature is bound to this panel, dragging</Fit>
                <Fit w={227}>a rectangle to select vertices on the canvas will</Fit>
                <Fit w={189}>only select those of the bound feature.</Fit>
              </div>
              <div className="absolute right-[3px] top-[263px] flex flex-col gap-[2px]">{[0, 1, 2, 3, 4, 5].map((i) => <i key={i} className="block h-px w-px bg-[#aaa]" />)}</div>
            </div>
            {/* Map canvas */}
            <div className="h-[539px] min-w-0 flex-1 overflow-hidden border-b border-[#c9c0bd] bg-[#84372e]">
              <svg width="692" height="538" viewBox="246 129 692 538" fill="none" className="block">
                <path d="M246 129H719L637 379L246 535Z" fill="#fff" />
                <path d="M246 125H703.5L624.5 366.7L246 517Z" fill="#743d32" stroke="#222" strokeWidth="1" />
                <path d="M246 535L637 379L612 481L246 626Z" fill="#ffe0e0" />
                <path d="M637 379L612 481L246 626" stroke="#3d2222" strokeWidth="1.1" />
                <path d="M637 379L246 535" stroke="#f00" strokeOpacity=".26" strokeWidth="10" />
                <path d="M719.3 128L637 379" stroke="#c41016" strokeWidth="1.2" />
                <path d="M637 379L246 535" stroke="#c41016" strokeWidth="1.3" />
                <path d="M441.5 451V463M435.5 457H447.5" stroke="#804040" strokeOpacity=".65" strokeWidth="3" />
                <circle cx="637.5" cy="379.5" r="3.2" stroke="#f00" strokeWidth="2.6" /><circle cx="611.7" cy="480.8" r="3.2" stroke="#ed1518" strokeWidth="1.3" />
              </svg>
            </div>
          </div>
          {/* Status bar */}
          <div className="flex h-[28px] shrink-0 items-center pl-[4px] text-[11px]">
            <div className={field + "h-[22px] w-[200px] pl-[7px] text-[#777]"}><svg width="14" height="14" viewBox="0 0 14 14" fill="none" stroke="#888" strokeWidth="1.4"><circle cx="5.8" cy="5.8" r="4.5" /><path d="M9 9L13 13" /></svg><Fit w={112} className="ml-[6px]">Type to locate (Ctrl+K)</Fit></div>
            <Fit w={8} className="ml-[37px]">di</Fit>
            <div className={field + "ml-[4px] h-[22px] w-[160px] pl-[6px]"}><Fit w={144}>79.775710411,11.837573688</Fit></div>
            <Ico s={17} className="ml-[3px]"><g stroke="#333" strokeWidth="2"><ellipse cx="8" cy="8" rx="4" ry="7" transform="rotate(-35 8 8)" fill="#ddd" /><ellipse cx="16" cy="16" rx="4" ry="7" transform="rotate(-50 16 16)" fill="#ddd" /><path d="M6 4L18 20M2 9L11 17M10 3L13 8M14 10L21 2M5 12L12 8" /></g><circle cx="13" cy="20" r="2" fill="#fff" stroke="#333" /></Ico>
            <Fit w={5} className="ml-[13px]">a</Fit>
            <div className={field + "ml-[2px] h-[22px] w-[81px] pl-[4px]"}><Fit w={15}>1:1</Fit><div className="ml-auto flex h-full w-[20px] items-center justify-center border-l border-[#b5b5b5] bg-[#f6f6f6]"><Arrow className="w-2" /></div></div>
            <svg className="ml-[11px] shrink-0" width="14" height="16" viewBox="0 0 14 16" fill="none"><path d="M3.5 8V4Q3.5 1 7 1Q10.5 1 10.5 4V8" stroke="#777" strokeWidth="1.8" /><rect x="1" y="7" width="12" height="8.5" rx="1" fill="#575757" /></svg>
            <div className="ml-[8px] w-[4px] overflow-hidden">r</div>
            <div className={field + "ml-[3px] h-5 w-[88px] pl-[4px]"}><Fit w={29}>100%</Fit><Spin /></div>
            <Fit w={4} className="ml-[8px]">a</Fit>
            <div className={field + "ml-[10px] h-5 w-[84px] pl-[4px]"}><Fit w={25}>0.0 °</Fit><Spin /></div>
            <div className="ml-[6px]"><Check on /></div><Fit w={35} className="ml-[4px]">Render</Fit>
            <Ico s={16} className="ml-[18px]"><circle cx="12" cy="12" r="9" fill="#ccc" /><path d="M2 2L22 22M22 2L2 22" stroke="#555" strokeWidth="2.6" /></Ico>
            <svg className="ml-[23px] shrink-0" width="17" height="16" viewBox="0 0 17 16"><path d="M8.5 1Q16.5 1 16.5 7Q16.5 11 12 12L13 15.5L8.5 12.5Q.5 12 .5 7Q.5 1 8.5 1Z" fill="#5b5b5b" /><g fill="#fff"><circle cx="5" cy="7" r="1" /><circle cx="8.5" cy="7" r="1" /><circle cx="12" cy="7" r="1" /></g></svg>
            <svg className="ml-auto mr-px mt-[13px]" width="11" height="11" viewBox="0 0 11 11" fill="#b5b5b5"><path d="M9 0H10V1H9ZM6 3H7V4H6ZM9 3H10V4H9ZM3 6H4V7H3ZM6 6H7V7H6ZM9 6H10V7H9ZM0 9H1V10H0ZM3 9H4V10H3ZM6 9H7V10H6ZM9 9H10V10H9Z" /></svg>
          </div>
        </div>

        {/* Vertex tool menu */}
        <div className="absolute left-[373px] top-[123px] flex w-[238px] flex-col border border-[#979797] bg-white shadow-[3px_3px_3px_rgba(0,0,0,0.5)]">
          <div className="flex h-[22px] items-center pl-[5px]"><Ico s={17}><Vertex /></Ico><Fit w={120} className="ml-[5px]"><U>V</U>ertex Tool (All Layers)</Fit></div>
          <div className="flex h-[23px] items-center bg-[#3399ff] pl-[3px] text-white"><div className="flex h-[21px] w-[21px] items-center justify-center border border-[#8db4dc] bg-[#6fa5dc]"><Ico s={16}><Vertex /></Ico></div><Fit w={141} className="ml-[3px]"><U>V</U>ertex Tool (Current Layer)</Fit></div>
        </div>
        <svg className="absolute left-[525px] top-[157px]" width="13" height="20" viewBox="0 0 13 20"><path d="M.7 1V15.5L4.2 12.3L7 18.5L9.5 17.3L6.8 11.5H11.7Z" fill="#fff" stroke="#000" /></svg>
      </div>
    </div>
  );
}
